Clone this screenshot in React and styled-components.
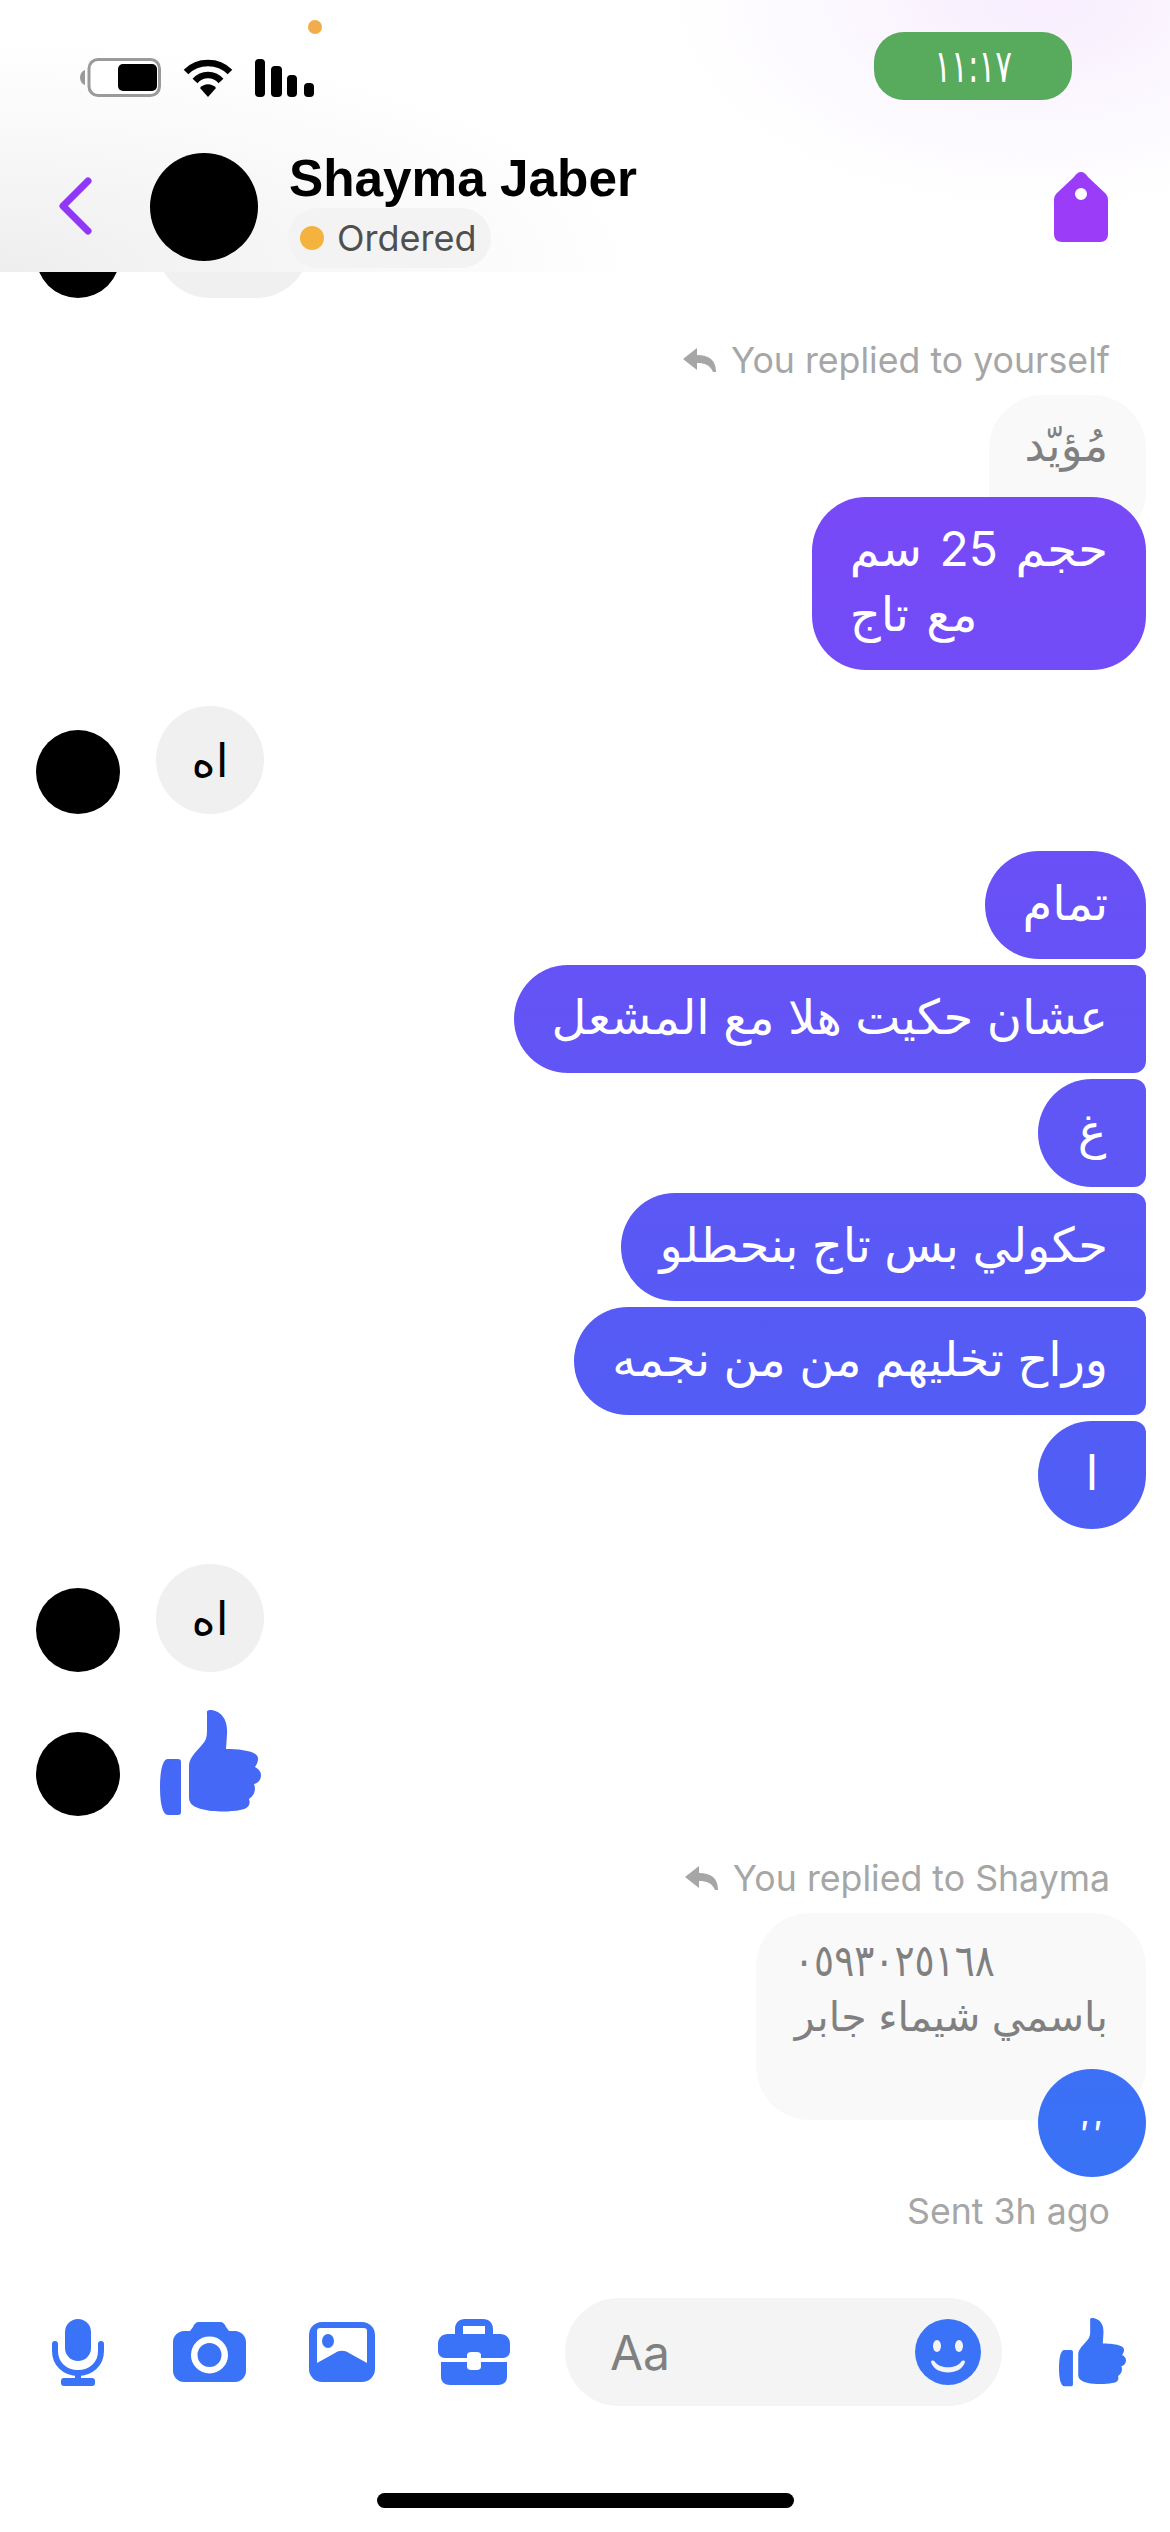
import styled, { createGlobalStyle } from "styled-components";

const GlobalStyle = createGlobalStyle`
  html, body {
    margin: 0;
    padding: 0;
    background: #fff;
  }
`;

const UI_FONT = `Inter, Roboto, "DejaVu Sans", sans-serif`;
const AR_FONT = `Inter, "DejaVu Sans", "Noto Sans", sans-serif`;

const Screen = styled.div`
  width: 1170px;
  height: 2532px;
  display: flex;
  flex-direction: column;
  overflow: hidden;
  background: #fff;
  font-family: ${UI_FONT};
`;

/* header */
const Header = styled.header`
  position: relative;
  z-index: 2;
  height: 272px;
  flex: none;
  box-sizing: border-box;
  display: flex;
  flex-direction: column;
  background:
    radial-gradient(ellipse 370px 210px at 1040px 0, #f8eefe 0, #fbf6ff 45%, rgba(255, 255, 255, 0) 100%),
    radial-gradient(ellipse 640px 230px at 0 272px, #eeeeee 0, #f7f7f7 50%, rgba(255, 255, 255, 0) 100%),
    #fff;
`;

const StatusBar = styled.div`
  height: 153px;
  box-sizing: border-box;
  padding: 32px 98px 0 80px;
  display: flex;
  justify-content: space-between;
  align-items: flex-start;
`;

const StatusIcons = styled.div`
  display: flex;
  align-items: center;
  gap: 22px;
  margin-top: 26px;
`;

const RecordingDot = styled.span`
  position: absolute;
  left: 308px;
  top: 20px;
  width: 14px;
  height: 14px;
  border-radius: 50%;
  background: #f3ac4b;
`;

const ClockPill = styled.div`
  width: 198px;
  height: 68px;
  border-radius: 30px;
  background: #58aa5d;
  color: #fff;
  display: flex;
  align-items: center;
  justify-content: center;
`;

const ClockText = styled.span`
  font-family: "DejaVu Sans", sans-serif;
  font-size: 46px;
  letter-spacing: -3px;
  transform: scaleX(0.68);
`;

const NavRow = styled.div`
  display: flex;
  align-items: flex-start;
  padding: 0 62px 0 58px;
`;

const BackButton = styled.div`
  width: 34px;
  height: 58px;
  margin-top: 24px;
  flex: none;
`;

const HeaderAvatar = styled.div`
  width: 108px;
  height: 108px;
  margin-left: 58px;
  border-radius: 50%;
  background: #000;
  flex: none;
`;

const NameBlock = styled.div`
  margin-left: 31px;
  flex: 1;
  display: flex;
  flex-direction: column;
  align-items: flex-start;
`;

const Name = styled.div`
  font-family: "Liberation Sans", Arial, sans-serif;
  font-weight: 700;
  font-size: 51.3px;
  line-height: 51px;
  margin-bottom: 4px;
  color: #000;
`;

const StatusChip = styled.div`
  display: flex;
  align-items: center;
  gap: 13px;
  height: 60px;
  margin-left: -1px;
  box-sizing: border-box;
  padding: 0 14px 0 12px;
  border-radius: 30px;
  background: #f3f3f3;
  color: #4f4f4f;
  font-size: 36px;
`;

const ChipDot = styled.span`
  width: 24px;
  height: 24px;
  border-radius: 50%;
  background: #f4b33f;
`;

const TagSlot = styled.div`
  margin-top: 19px;
  flex: none;
  display: flex;
`;

/* messages */
const MessageList = styled.main`
  flex: 1;
  min-height: 0;
  overflow: hidden;
  display: flex;
  flex-direction: column;
`;

const IncomingRow = styled.div`
  display: flex;
  align-items: flex-end;
  gap: 36px;
  padding-left: 36px;
  margin-top: ${(p) => p.$top}px;
`;

const SmallAvatar = styled.div`
  width: 84px;
  height: 84px;
  border-radius: 50%;
  background: #000;
  flex: none;
`;

const IncomingBubble = styled.div`
  min-width: 108px;
  height: 108px;
  box-sizing: border-box;
  padding: 0 ${(p) => p.$pad}px;
  border-radius: 54px;
  background: #f0f0f0;
  color: #000;
  display: flex;
  align-items: center;
  justify-content: center;
  direction: rtl;
  font-family: ${AR_FONT};
  font-size: 46px;
`;

const ThumbSlot = styled.div`
  display: flex;
  margin-left: 4px;
`;

const OwnColumn = styled.div`
  display: flex;
  flex-direction: column;
  align-items: flex-end;
  padding-right: 24px;
  margin-top: ${(p) => p.$top}px;
  gap: ${(p) => p.$gap || 0}px;
`;

const ReplyLabel = styled.div`
  display: flex;
  align-items: center;
  gap: 15px;
  padding-right: 36px;
  color: #a6a6a6;
  font-size: 35.7px;
  line-height: 44px;
  margin-bottom: 13px;
`;

const QuotedBubble = styled.div`
  box-sizing: border-box;
  padding: ${(p) => p.$pad};
  border-radius: 54px;
  background: #f9f9f9;
  color: #808080;
  direction: rtl;
  font-family: ${AR_FONT};
  font-size: ${(p) => p.$size}px;
  line-height: ${(p) => p.$line}px;
  width: ${(p) => p.$width}px;
  height: ${(p) => p.$height}px;
  margin-bottom: ${(p) => p.$overlap}px;
`;

const PhoneLine = styled.div`
  direction: ltr;
  text-align: left;
  font-size: 44px;
  transform: scaleX(0.85);
  transform-origin: left center;
`;

const OwnBubble = styled.div`
  min-width: 108px;
  box-sizing: border-box;
  padding: 18.5px 38px 24.5px;
  direction: ltr;
  text-align: center;
  color: #fff;
  font-family: ${AR_FONT};
  font-size: 48px;
  line-height: 65px;
  border-radius: 54px ${(p) => p.$tr}px ${(p) => p.$br}px 54px;
  background: linear-gradient(180deg, #8a40f8 0, #7849f7 500px, #6a50f6 851px, #4e5ff5 1532px, #3a72f6 2140px) fixed;
  white-space: pre-line;
`;

const TwoLineBubble = styled(OwnBubble)`
  text-align: left;
  word-spacing: 4px;
`;

const TickBubble = styled(OwnBubble)`
  height: 108px;
  padding: 32px 0 0 4px;
  font-size: 34px;
  font-weight: 500;
  letter-spacing: 5px;
`;

const SentNote = styled.div`
  margin-top: 12px;
  padding-right: 36px;
  color: #a6a6a6;
  font-size: 35.7px;
  line-height: 44px;
`;

/* composer */
const Composer = styled.footer`
  flex: none;
  height: 234px;
  box-sizing: border-box;
  padding: 0 45px 0 52px;
  display: flex;
  flex-direction: column;
`;

const ComposerRow = styled.div`
  display: flex;
  align-items: center;
  height: 108px;
`;

const ToolIcon = styled.span`
  display: flex;
  flex: none;
  margin-left: ${(p) => p.$left}px;
`;

const InputPill = styled.div`
  width: 437px;
  height: 108px;
  margin-left: 55px;
  box-sizing: border-box;
  padding: 0 21px 0 45px;
  border-radius: 54px;
  background: #f4f4f4;
  display: flex;
  align-items: center;
  justify-content: space-between;
  flex: none;
  color: #808080;
  font-size: 48px;
`;

const HomeBar = styled.div`
  align-self: center;
  width: 417px;
  height: 15px;
  margin: 87px 0 0 -7px;
  border-radius: 8px;
  background: #000;
`;

const BLUE = "#3a73f7";

const Thumb = ({ width, height, color }) => (
  <svg width={width} height={height} viewBox="0 0 101 106" preserveAspectRatio="none" fill={color}>
    <path d="M8 49H18a3 3 0 0 1 3 3v50a3 3 0 0 1-3 3H8C3 105 0 95 0 77S3 49 8 49Z" />
    <path d="M47 3C46 0 50 0 52 0C62 2 68 10 67 24L66 39C80 39 99 41 98 49C98 53 96 55 95 57C99 59 101 62 101 65C101 70 98 73 94 74C96 79 95 85 89 89C91 95 88 99 80 100C65 103 35 102 30 92C29 90 29 88 29 86L29 56C29 48 36 42 41 36C47 30 47 26 47 18Z" />
  </svg>
);

const ReplyArrow = () => (
  <svg width="33" height="24" viewBox="0 0 33 24" fill="#a6a6a6">
    <path d="M14 0L0 11L14 22V15C22 15 27 17 30 24H33C33 12 26 7 14 7Z" />
  </svg>
);

const Battery = () => (
  <svg width="81" height="39" viewBox="0 0 81 39">
    <rect x="9" y="1.5" width="70.5" height="36" rx="9" fill="#fff" stroke="#9a9a9a" strokeWidth="3" />
    <rect x="38" y="6" width="39" height="27" rx="5" fill="#000" />
    <path d="M5 12C2 13 0 16 0 19.5S2 26 5 27Z" fill="#9a9a9a" />
  </svg>
);

const Wifi = () => (
  <svg width="50" height="38" viewBox="0 0 50 38" fill="none" stroke="#000" strokeWidth="6.5">
    <path d="M3 13C15 1 35 1 47 13" />
    <path d="M12 22C19 14 31 14 38 22" />
    <path d="M25 38L17 29C21 24 29 24 33 29Z" fill="#000" stroke="none" />
  </svg>
);

const Signal = () => (
  <svg width="59" height="38" viewBox="0 0 59 38" fill="#000">
    <rect x="0" y="0" width="10" height="38" rx="4" />
    <rect x="16" y="7" width="11" height="31" rx="4" />
    <rect x="32" y="16" width="10" height="22" rx="4" />
    <rect x="49" y="24" width="10" height="14" rx="4" />
  </svg>
);

const Chevron = () => (
  <svg width="34" height="58" viewBox="0 0 34 58" fill="none" stroke="#9138f8" strokeWidth="7" strokeLinecap="round" strokeLinejoin="round">
    <path d="M30 4L5 29L30 54" />
  </svg>
);

const Tag = () => (
  <svg width="54" height="70" viewBox="0 0 54 70" fill="#9b3df8">
    <path fillRule="evenodd" d="M27 0C24 0 22 2 20 5L3 21C1 23 0 25 0 28V62C0 67 3 70 8 70H46C51 70 54 67 54 62V28C54 25 53 23 51 21L34 5C32 2 30 0 27 0ZM27 16A6 6 0 1 1 27 28A6 6 0 1 1 27 16Z" />
  </svg>
);

const Mic = () => (
  <svg width="52" height="67" viewBox="0 0 52 67" fill={BLUE}>
    <rect x="13" y="0" width="26" height="42" rx="13" />
    <path d="M3 25V32C3 45 13 54 26 54S49 45 49 32V25" fill="none" stroke={BLUE} strokeWidth="6" strokeLinecap="round" />
    <rect x="23" y="52" width="6" height="12" />
    <rect x="9" y="59" width="34" height="8" rx="3" />
  </svg>
);

const Camera = () => (
  <svg width="73" height="60" viewBox="0 0 73 60">
    <path fill={BLUE} d="M26 0H47C50 0 52 2 53 5L56 9H62C68 9 73 14 73 20V49C73 55 68 60 62 60H11C5 60 0 55 0 49V20C0 14 5 9 11 9H17L20 5C21 2 23 0 26 0Z" />
    <circle cx="36.5" cy="33" r="15.25" fill={BLUE} stroke="#fff" strokeWidth="6.5" />
  </svg>
);

const Picture = () => (
  <svg width="66" height="60" viewBox="0 0 66 60">
    <rect width="66" height="60" rx="13" fill={BLUE} />
    <path d="M8 9C8 7 9 6 11 6H55C57 6 58 7 58 9V41L40 31C36 28 30 28 26 31L8 41Z" fill="#fff" />
    <ellipse cx="19" cy="19" rx="6" ry="7" fill={BLUE} />
  </svg>
);

const Briefcase = () => (
  <svg width="72" height="66" viewBox="0 0 72 66" fill={BLUE}>
    <path fillRule="evenodd" d="M27 0H45C51 0 55 4 55 10V15H62C68 15 72 19 72 25V32C72 36 69 39 65 39H43V36C43 34 41 33 39 33H33C31 33 29 34 29 36V39H7C3 39 0 36 0 32V25C0 19 4 15 10 15H17V10C17 4 21 0 27 0ZM25 7V15H47V7Z" />
    <path d="M3 43H29V48C29 50 31 51 33 51H39C41 51 43 50 43 48V43H69V58C69 63 65 66 60 66H12C7 66 3 63 3 58Z" />
  </svg>
);

const Smile = () => (
  <svg width="66" height="66" viewBox="0 0 66 66">
    <circle cx="33" cy="33" r="33" fill={BLUE} />
    <ellipse cx="22" cy="27" rx="4" ry="6" fill="#f4f4f4" />
    <ellipse cx="44" cy="27" rx="4" ry="6" fill="#f4f4f4" />
    <path d="M16 43C20 57 46 57 50 43C50 41 47 41 46 43C41 50 25 50 20 43C19 41 16 41 16 43Z" fill="#f4f4f4" />
  </svg>
);

const groupBubbles = [
  { text: "تمام", tr: 54, br: 12 },
  { text: "عشان حكيت هلا مع المشعل", tr: 12, br: 12 },
  { text: "غ", tr: 12, br: 12 },
  { text: "حكولي بس تاج بنحطلو", tr: 12, br: 12 },
  { text: "وراح تخليهم من من نجمه", tr: 12, br: 12 },
  { text: "ا", tr: 12, br: 54 },
];

export default function App() {
  return (
    <Screen>
      <GlobalStyle />
      <Header>
        <RecordingDot />
        <StatusBar>
          <StatusIcons>
            <Battery />
            <Wifi />
            <Signal />
          </StatusIcons>
          <ClockPill>
            <ClockText>١١:١٧</ClockText>
          </ClockPill>
        </StatusBar>
        <NavRow>
          <BackButton>
            <Chevron />
          </BackButton>
          <HeaderAvatar />
          <NameBlock>
            <Name>Shayma Jaber</Name>
            <StatusChip>
              <ChipDot />
              Ordered
            </StatusChip>
          </NameBlock>
          <TagSlot>
            <Tag />
          </TagSlot>
        </NavRow>
      </Header>

      <MessageList>
        <IncomingRow $top={-82}>
          <SmallAvatar />
          <IncomingBubble $pad={44}>نعم</IncomingBubble>
        </IncomingRow>

        <OwnColumn $top={40}>
          <ReplyLabel>
            <ReplyArrow />
            You replied to yourself
          </ReplyLabel>
          <QuotedBubble $pad="19px 38px" $size={45} $line={62} $width={157} $height={150} $overlap={-48}>
            مُؤيّد
          </QuotedBubble>
          <TwoLineBubble $tr={54} $br={54}>
            {"حجم 25 سم\nمع تاج"}
          </TwoLineBubble>
        </OwnColumn>

        <IncomingRow $top={36}>
          <SmallAvatar />
          <IncomingBubble $pad={30}>اه</IncomingBubble>
        </IncomingRow>

        <OwnColumn $top={37} $gap={6.1}>
          {groupBubbles.map((b) => (
            <OwnBubble key={b.text} $tr={b.tr} $br={b.br}>
              {b.text}
            </OwnBubble>
          ))}
        </OwnColumn>

        <IncomingRow $top={35}>
          <SmallAvatar />
          <IncomingBubble $pad={30}>اه</IncomingBubble>
        </IncomingRow>

        <IncomingRow $top={38}>
          <SmallAvatar />
          <ThumbSlot>
            <Thumb width={101} height={106} color="#4568f6" />
          </ThumbSlot>
        </IncomingRow>

        <OwnColumn $top={40}>
          <ReplyLabel>
            <ReplyArrow />
            You replied to Shayma
          </ReplyLabel>
          <QuotedBubble $pad="19px 38px" $size={41} $line={56} $width={390} $height={207} $overlap={-51}>
            <PhoneLine>٠٥٩٣٠٢٥١٦٨</PhoneLine>
            باسمي شيماء جابر
          </QuotedBubble>
          <TickBubble $tr={54} $br={54}>′′</TickBubble>
          <SentNote>Sent 3h ago</SentNote>
        </OwnColumn>
      </MessageList>

      <Composer>
        <ComposerRow>
          <ToolIcon $left={0}><Mic /></ToolIcon>
          <ToolIcon $left={69}><Camera /></ToolIcon>
          <ToolIcon $left={63}><Picture /></ToolIcon>
          <ToolIcon $left={63}><Briefcase /></ToolIcon>
          <InputPill>
            Aa
            <Smile />
          </InputPill>
          <ToolIcon $left={57}>
            <Thumb width={67} height={69} color={BLUE} />
          </ToolIcon>
        </ComposerRow>
        <HomeBar />
      </Composer>
    </Screen>
  );
}
